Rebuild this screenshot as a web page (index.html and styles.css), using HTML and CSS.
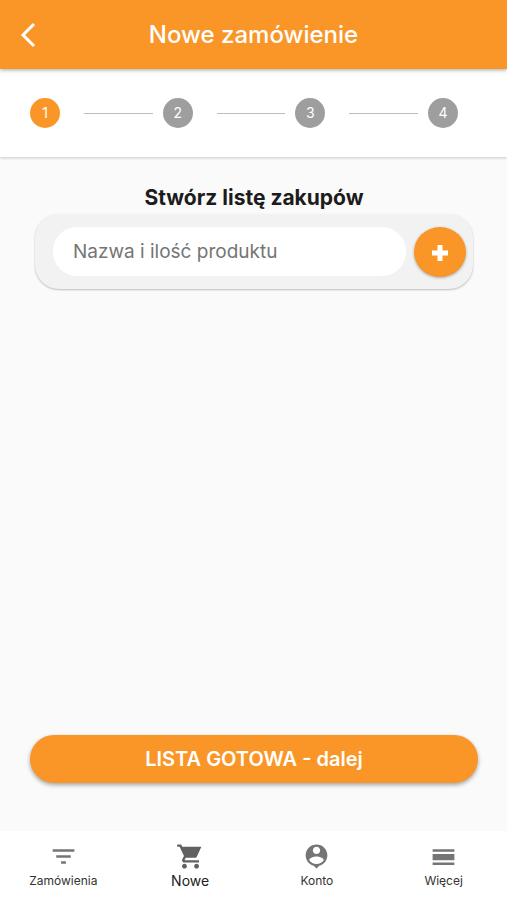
FILE: index.html
```html
<!DOCTYPE html>
<html lang="pl">
<head>
<meta charset="utf-8">
<meta name="viewport" content="width=device-width, initial-scale=1">
<title>Nowe zamówienie</title>
<link rel="stylesheet" href="styles.css">
</head>
<body>
<header class="topbar">
  <button class="back" type="button" aria-label="Wstecz">
    <svg width="16" height="26" viewBox="0 0 16 26"><path d="M14 2 3 13l11 11" fill="none" stroke="currentColor" stroke-width="3"/></svg>
  </button>
  <h1 class="title">Nowe zamówienie</h1>
</header>
<ol class="stepper">
  <li class="step step-active">1</li>
  <li class="line" role="presentation"></li>
  <li class="step">2</li>
  <li class="line" role="presentation"></li>
  <li class="step">3</li>
  <li class="line" role="presentation"></li>
  <li class="step">4</li>
</ol>
<main class="content">
  <h2 class="heading"><label for="product">Stwórz listę zakupów</label></h2>
  <form class="entry">
    <input class="field" id="product" type="text" placeholder="Nazwa i ilość produktu">
    <button class="add" type="button" aria-label="Dodaj">
      <svg width="16" height="18" viewBox="0 0 16 18"><path d="M8 2v16M0 10h16" stroke="currentColor" stroke-width="5"/></svg>
    </button>
  </form>
  <button class="next" type="button">LISTA GOTOWA - dalej</button>
</main>
<nav class="tabs">
  <a class="tab" href="#orders">
    <svg class="icon" viewBox="0 0 24 24"><path d="M10 18h4v-2h-4v2zM3 6v2h18V6H3zm3 7h12v-2H6v2z"/></svg>
    <span>Zamówienia</span>
  </a>
  <a class="tab tab-active" href="#new">
    <svg class="icon" viewBox="0 0 24 24"><path d="M7 18c-1.100 0-1.990.9-1.990 2S5.900 22 7 22s2-.9 2-2-.9-2-2-2zM1 2v2h2l3.600 7.590-1.350 2.450c-.16.28-.25.61-.25.96 0 1.100.9 2 2 2h12v-2H7.420c-.14 0-.25-.11-.25-.25l.03-.12.900-1.630h7.450c.75 0 1.410-.41 1.750-1.030L21 4H5.210l-.94-2H1zm16 16c-1.100 0-1.990.9-1.990 2s.89 2 1.990 2 2-.9 2-2-.9-2-2-2z"/></svg>
    <span>Nowe</span>
  </a>
  <a class="tab" href="#account">
    <svg class="icon" viewBox="0 0 24 24"><path d="M12 2c-4.970 0-9 4.030-9 9 0 4.170 2.840 7.670 6.690 8.690L12 22l2.310-2.310C18.160 18.670 21 15.170 21 11c0-4.970-4.030-9-9-9zm0 2c1.660 0 3 1.340 3 3s-1.340 3-3 3-3-1.340-3-3 1.340-3 3-3zm0 14.300c-2.500 0-4.710-1.280-6-3.220.03-1.990 4-3.080 6-3.080 1.990 0 5.970 1.090 6 3.080-1.290 1.940-3.500 3.220-6 3.220z"/></svg>
    <span>Konto</span>
  </a>
  <a class="tab" href="#more">
    <svg class="icon" viewBox="0 0 24 24"><path d="M3 17h18v2H3zM3 10h18v5H3zM3 6h18v2H3z"/></svg>
    <span>Więcej</span>
  </a>
</nav>
</body>
</html>
```
FILE: styles.css
```css
* {
  box-sizing: border-box;
}

body {
  margin: 0;
  min-height: 100vh;
  display: flex;
  flex-direction: column;
  background: #fafafa;
  color: #1c1c1c;
  font-family: Inter, "Liberation Sans", sans-serif;
}

button,
input {
  border: 0;
  font: inherit;
}

button {
  padding: 0;
  color: #fff;
  background: #fa9628;
}

.topbar {
  display: grid;
  grid-template-columns: 56px 1fr 56px;
  align-items: center;
  height: 69px;
  background: #fa9628;
  color: #fff;
  box-shadow: 0 1px 4px rgba(0, 0, 0, 0.35);
  z-index: 1;
}

.back {
  display: flex;
  justify-content: center;
  background: none;
}

.title {
  margin: 0;
  font-size: 24px;
  line-height: 32px;
  font-weight: 500;
  text-align: center;
}

.stepper {
  display: flex;
  align-items: center;
  height: 88px;
  margin: 0;
  padding: 0 49px 0 30px;
  list-style: none;
  background: #fff;
  box-shadow: 0 1px 3px rgba(0, 0, 0, 0.2);
}

.step {
  width: 30px;
  height: 30px;
  border-radius: 50%;
  background: #9e9e9e;
  color: #fff;
  font-size: 14px;
  line-height: 30px;
  text-align: center;
}

.step-active {
  background: #fa9628;
}

.line {
  flex: 1;
  height: 1px;
  margin: 0 10px 0 24px;
  background: #bdbdbd;
}

.content {
  flex: 1;
  display: flex;
  flex-direction: column;
  padding: 28px 29px 48px 30px;
}

.heading {
  margin: 0;
  font-size: 21px;
  line-height: 26px;
  font-weight: 700;
  text-align: center;
}

.entry {
  display: flex;
  align-items: center;
  gap: 8px;
  height: 75px;
  margin: 3px 5px 0;
  padding: 0 7px 0 18px;
  border-radius: 24px;
  background: #f2f2f2;
  box-shadow: 0 1px 2px rgba(0, 0, 0, 0.25);
}

.field {
  flex: 1;
  min-width: 0;
  height: 49px;
  padding: 0 20px;
  border-radius: 24px;
  background: #fff;
  font-size: 19px;
}

.field::placeholder {
  color: #757575;
  opacity: 1;
}

.add {
  display: flex;
  align-items: center;
  justify-content: center;
  width: 52px;
  height: 50px;
  border-radius: 50%;
  box-shadow: 0 1px 3px rgba(0, 0, 0, 0.3);
}

.next {
  height: 48px;
  margin-top: auto;
  border-radius: 24px;
  font-size: 20px;
  font-weight: 600;
  box-shadow: 0 2px 4px rgba(0, 0, 0, 0.35);
}

.tabs {
  display: grid;
  grid-template-columns: repeat(4, 1fr);
  height: 69px;
  padding-top: 11px;
  background: #fff;
}

.tab {
  display: flex;
  flex-direction: column;
  align-items: center;
  color: #333;
  font-size: 12px;
  line-height: 20px;
  text-decoration: none;
}

.tab-active {
  color: #212121;
  font-size: 14px;
}

.icon {
  width: 29px;
  height: 29px;
  fill: #757575;
}

.tab-active .icon {
  fill: #616161;
}
```
